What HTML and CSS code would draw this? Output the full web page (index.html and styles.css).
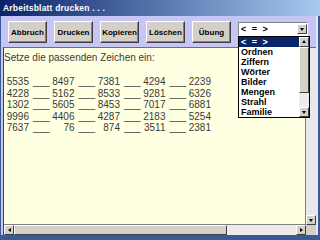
FILE: index.html
```html
<!DOCTYPE html>
<html lang="de">
<head>
    <meta charset="UTF-8">
    <title>Arbeitsblatt drucken</title>
    <link rel="stylesheet" href="styles.css">
</head>
<body>

    <div class="window">
        <div class="titlebar">Arbeitsblatt drucken . . .</div>

        <div class="toolbar">
            <button class="btn">Abbruch</button>
            <button class="btn">Drucken</button>
            <button class="btn">Kopieren</button>
            <button class="btn">Löschen</button>
            <button class="btn">Übung</button>
            <div class="combo">
                <span class="combo-text">&lt; = &gt;</span>
                <span class="sb-btn combo-btn"><span class="tri tri-down"></span></span>
            </div>
        </div>

        <div class="panel">
            <div class="sheet">
                <p class="task">Setze die passenden Zeichen ein:</p>
                <div class="rows">
                    <div class="row">
                        <span class="cell"><span class="num">5535</span><span class="blank">___</span></span>
                        <span class="cell"><span class="num">8497</span><span class="blank">___</span></span>
                        <span class="cell"><span class="num">7381</span><span class="blank">___</span></span>
                        <span class="cell"><span class="num">4294</span><span class="blank">___</span></span>
                        <span class="cell"><span class="num">2239</span></span>
                    </div>
                    <div class="row">
                        <span class="cell"><span class="num">4228</span><span class="blank">___</span></span>
                        <span class="cell"><span class="num">5162</span><span class="blank">___</span></span>
                        <span class="cell"><span class="num">8533</span><span class="blank">___</span></span>
                        <span class="cell"><span class="num">9281</span><span class="blank">___</span></span>
                        <span class="cell"><span class="num">6326</span></span>
                    </div>
                    <div class="row">
                        <span class="cell"><span class="num">1302</span><span class="blank">___</span></span>
                        <span class="cell"><span class="num">5605</span><span class="blank">___</span></span>
                        <span class="cell"><span class="num">8453</span><span class="blank">___</span></span>
                        <span class="cell"><span class="num">7017</span><span class="blank">___</span></span>
                        <span class="cell"><span class="num">6881</span></span>
                    </div>
                    <div class="row">
                        <span class="cell"><span class="num">9996</span><span class="blank">___</span></span>
                        <span class="cell"><span class="num">4406</span><span class="blank">___</span></span>
                        <span class="cell"><span class="num">4287</span><span class="blank">___</span></span>
                        <span class="cell"><span class="num">2183</span><span class="blank">___</span></span>
                        <span class="cell"><span class="num">5254</span></span>
                    </div>
                    <div class="row">
                        <span class="cell"><span class="num">7637</span><span class="blank">___</span></span>
                        <span class="cell"><span class="num">76</span><span class="blank">___</span></span>
                        <span class="cell"><span class="num">874</span><span class="blank">___</span></span>
                        <span class="cell"><span class="num">3511</span><span class="blank">___</span></span>
                        <span class="cell"><span class="num">2381</span></span>
                    </div>
                </div>
            </div>

            <div class="vbar">
                <span class="sb-btn"><span class="tri tri-down"></span></span>
            </div>
            <div class="hbar">
                <span class="sb-btn"><span class="tri tri-left"></span></span>
                <span class="thumb"></span>
                <span class="sb-btn"><span class="tri tri-right"></span></span>
            </div>
            <div class="corner"></div>
        </div>

        <!-- open list of the combo box -->
        <div class="droplist">
            <ul class="items">
                <li class="selected">&lt; = &gt;</li>
                <li>Ordnen</li>
                <li>Ziffern</li>
                <li>Wörter</li>
                <li>Bilder</li>
                <li>Mengen</li>
                <li>Strahl</li>
                <li>Familie</li>
            </ul>
            <div class="list-bar">
                <span class="sb-btn"><span class="tri tri-up"></span></span>
                <span class="list-thumb"></span>
                <span class="sb-btn"><span class="tri tri-down"></span></span>
            </div>
        </div>
    </div>

</body>
</html>
```

FILE: styles.css
```css
body {
    margin: 0;
    width: 320px;
    height: 240px;
    overflow: hidden;
    font-family: "Liberation Sans", Arial, sans-serif;
}

.window {
    position: relative;
    width: 320px;
    height: 240px;
    box-sizing: border-box;
    display: flex;
    flex-direction: column;
    background-color: #c6c6f6;
    border-left: 1px solid #3a5a94;
    border-right: 2px solid #3a5a94;
    border-bottom: 5px solid #3a5a94;
    box-shadow: inset -2px 0 #e4e4fc;
}

.titlebar {
    height: 16px;
    line-height: 16px;
    padding-left: 3px;
    margin-left: -1px;
    margin-right: -2px;
    background: linear-gradient(to right, #0a246a, #a6caf0);
    color: white;
    font-size: 8.5px;
    font-weight: bold;
    letter-spacing: 0.2px;
}

.toolbar {
    display: flex;
    align-items: flex-start;
    height: 31px;
    padding: 5px 0 0 7px;
    box-sizing: border-box;
}

.btn {
    width: 39px;
    height: 22px;
    margin-right: 7px;
    padding: 0;
    font-family: "Liberation Sans", Arial, sans-serif;
    font-size: 8px;
    font-weight: bold;
    color: black;
    background-color: #d4d0c8;
    border: 1px solid;
    border-color: #ffffff #404040 #404040 #ffffff;
    box-shadow: inset -1px -1px #808080;
}

.combo {
    display: flex;
    align-items: center;
    width: 70px;
    height: 14px;
    margin-top: 1px;
    box-sizing: border-box;
    background: white;
    border: 1px solid;
    border-color: #808080 #ffffff #ffffff #808080;
}

.combo-text {
    flex: 1;
    padding-left: 2px;
    font-size: 9px;
    font-weight: bold;
    word-spacing: 3px;
}

.combo-btn {
    height: 12px;
}

/* scrollbar pieces */
.sb-btn {
    display: flex;
    align-items: center;
    justify-content: center;
    width: 10px;
    height: 10px;
    box-sizing: border-box;
    background-color: #d4d0c8;
    border: 1px solid;
    border-color: #ffffff #404040 #404040 #ffffff;
}

.tri {
    width: 0;
    height: 0;
    border: 2px solid transparent;
}

.tri-down { border-top: 3px solid black; border-bottom: 0; margin-top: 1px; }
.tri-up { border-bottom: 3px solid black; border-top: 0; margin-bottom: 1px; }
.tri-left { border-right: 3px solid black; border-left: 0; }
.tri-right { border-left: 3px solid black; border-right: 0; }

.panel {
    flex: 1;
    margin: 0 0 0 2px;
    display: grid;
    grid-template-columns: 1fr 10px;
    grid-template-rows: 1fr 10px;
    border-top: 1px solid #6e6e6e;
    border-left: 1px solid #404040;
    width: 313px;
    box-sizing: border-box;
}

.sheet {
    background-color: #ffffe1;
    color: #3a3a3a;
    font-size: 10px;
    padding: 4px 0 0 0;
    overflow: hidden;
    border-bottom: 1px solid #808080;
    border-right: 1px solid #808080;
}

.task {
    margin: 0;
    line-height: 12px;
}

.rows {
    margin-top: 12px;
    padding-left: 1px;
}

.row {
    display: grid;
    grid-template-columns: repeat(4, 45.5px) auto;
    line-height: 11.5px;
}

.cell {
    white-space: nowrap;
}

.num {
    display: inline-block;
    width: 24px;
    text-align: right;
}

.blank {
    margin-left: 4px;
}

.vbar {
    display: flex;
    flex-direction: column;
    justify-content: flex-end;
    background-color: #e8e8ec;
}

.hbar {
    display: flex;
    background-color: #ececec;
}

.thumb {
    width: 213px;
    background-color: #d4d0c8;
    border: 1px solid;
    border-color: #ffffff #404040 #404040 #ffffff;
    box-sizing: border-box;
    margin-right: auto;
}

.corner {
    background-color: #d4d0c8;
}

.droplist {
    position: absolute;
    left: 237px;
    top: 36px;
    width: 72px;
    height: 82px;
    box-sizing: border-box;
    display: flex;
    background: white;
    border: 1px solid black;
}

.items {
    flex: 1;
    margin: 0;
    padding: 0;
    list-style: none;
    font-size: 9px;
    font-weight: bold;
}

.items li {
    height: 10px;
    line-height: 10px;
    padding-left: 2px;
}

.items .selected {
    background-color: #0a246a;
    color: white;
    word-spacing: 3px;
}

.list-bar {
    display: flex;
    flex-direction: column;
    background-color: #ececec;
}

.list-thumb {
    height: 46px;
    background-color: #d4d0c8;
    border: 1px solid;
    border-color: #ffffff #404040 #404040 #ffffff;
    box-sizing: border-box;
    margin-bottom: auto;
}
```
